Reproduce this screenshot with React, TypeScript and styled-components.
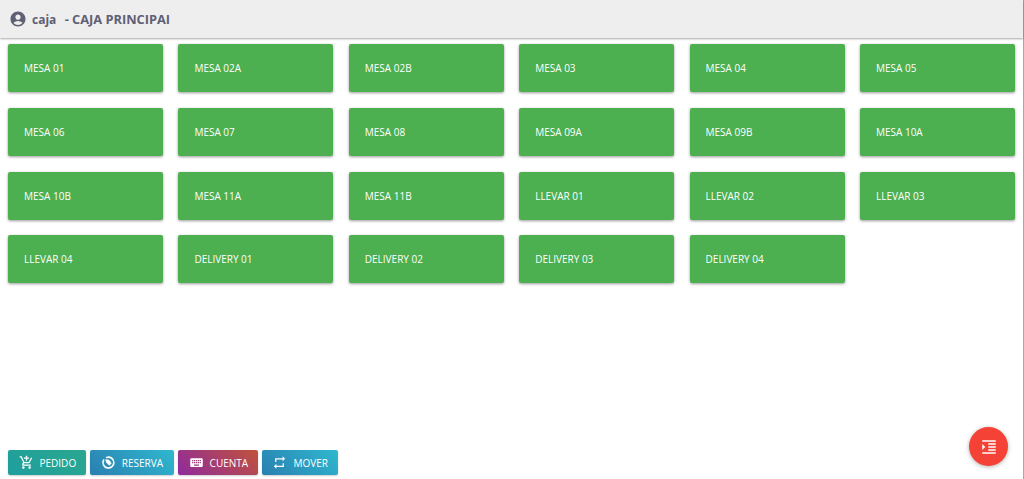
import React from "react";
import styled, { createGlobalStyle } from "styled-components";
import {
  MdAccountCircle,
  MdAddShoppingCart,
  MdFormatIndentIncrease,
  MdKeyboard,
  MdRepeat,
} from "react-icons/md";

const GlobalStyle = createGlobalStyle`
  html, body {
    margin: 0;
    padding: 0;
    height: 100%;
    background: #fff;
    overflow: hidden;
  }
  #root {
    height: 100%;
  }
`;

const Page = styled.div`
  height: 479px;
  display: flex;
  flex-direction: column;
  font-family: "Open Sans", "Liberation Sans", sans-serif;
  position: relative;
  border-right: 1px solid #a8a8a8;
`;

const Header = styled.header`
  height: 38px;
  flex: none;
  display: flex;
  align-items: center;
  padding: 0 9px;
  background: #eeeeee;
  box-shadow: 0 1px 2px rgba(0, 0, 0, 0.35);
  color: #5f5f75;
  font-size: 12.8px;
  font-weight: 700;
  white-space: pre;
`;

const UserIcon = styled(MdAccountCircle)`
  width: 18px;
  height: 18px;
  margin-right: 5px;
`;

const UserName = styled.span`
  font-size: 12px;
`;

const Title = styled.span`
  margin-left: 5px;
`;

const Tables = styled.main`
  flex: 1;
  display: grid;
  grid-template-columns: repeat(6, 155px);
  grid-auto-rows: 48px;
  column-gap: 15.4px;
  row-gap: 15.8px;
  padding: 6px 8px 0;
`;

const TableButton = styled.button`
  border: 0;
  border-radius: 2px;
  background: #4caf50;
  color: #fff;
  font: 400 10px "Open Sans", "Liberation Sans", sans-serif;
  text-align: left;
  padding: 0 16px;
  box-shadow: 0 1px 3px rgba(0, 0, 0, 0.4);
`;

const Footer = styled.footer`
  flex: none;
  display: flex;
  gap: 4.3px;
  padding: 0 8px 4px;
`;

const ActionButton = styled.button<{ $from: string; $to: string; $w: number }>`
  width: ${(p) => p.$w}px;
  height: 25px;
  border: 0;
  border-radius: 2px;
  padding: 0 0 0 10.5px;
  display: flex;
  align-items: center;
  gap: 6px;
  color: #fff;
  font: 400 10px "Open Sans", "Liberation Sans", sans-serif;
  background: linear-gradient(45deg, ${(p) => p.$from}, ${(p) => p.$to});
  box-shadow: 0 1px 2px rgba(0, 0, 0, 0.2);

  svg {
    width: 15px;
    height: 15px;
    flex: none;
  }
`;

const Fab = styled.button`
  position: absolute;
  right: 15px;
  bottom: 13px;
  width: 39px;
  height: 39px;
  border: 0;
  border-radius: 50%;
  padding: 0;
  display: flex;
  align-items: center;
  justify-content: center;
  background: #f44336;
  color: #fff;
  box-shadow: 0 1px 4px rgba(0, 0, 0, 0.3);

  svg {
    width: 18px;
    height: 18px;
  }
`;

const tables = [
  "MESA 01", "MESA 02A", "MESA 02B", "MESA 03", "MESA 04", "MESA 05",
  "MESA 06", "MESA 07", "MESA 08", "MESA 09A", "MESA 09B", "MESA 10A",
  "MESA 10B", "MESA 11A", "MESA 11B", "LLEVAR 01", "LLEVAR 02", "LLEVAR 03",
  "LLEVAR 04", "DELIVERY 01", "DELIVERY 02", "DELIVERY 03", "DELIVERY 04",
];

const blue = { from: "#2a7fb0", to: "#2fb8cf" };

// ring with a diagonal hand, closest to the reserva glyph
function ReservaIcon() {
  return (
    <svg viewBox="0 0 24 24" fill="none" stroke="currentColor">
      <path
        d="M9 3.9A8.7 8.7 0 1 1 4.2 8"
        strokeWidth="2.6"
        strokeLinecap="round"
      />
      <path d="M7.5 7.5 12.5 8l4 5-3 3.5-4.5-4z" fill="currentColor" strokeWidth="1" />
    </svg>
  );
}

export default function App() {
  return (
    <Page>
      <GlobalStyle />
      <Header>
        <UserIcon />
        <UserName>caja</UserName>
        <Title> - CAJA PRINCIPAI</Title>
      </Header>
      <Tables>
        {tables.map((name) => (
          <TableButton key={name}>{name}</TableButton>
        ))}
      </Tables>
      <Footer>
        <ActionButton $from="#1f9e9e" $to="#2aa78f" $w={78}>
          <MdAddShoppingCart />
          PEDIDO
        </ActionButton>
        <ActionButton $from={blue.from} $to={blue.to} $w={83.5}>
          <ReservaIcon />
          RESERVA
        </ActionButton>
        <ActionButton $from="#8e2a9e" $to="#c0533a" $w={79.5}>
          <MdKeyboard />
          CUENTA
        </ActionButton>
        <ActionButton $from={blue.from} $to={blue.to} $w={76.5}>
          <MdRepeat />
          MOVER
        </ActionButton>
      </Footer>
      <Fab>
        <MdFormatIndentIncrease />
      </Fab>
    </Page>
  );
}
